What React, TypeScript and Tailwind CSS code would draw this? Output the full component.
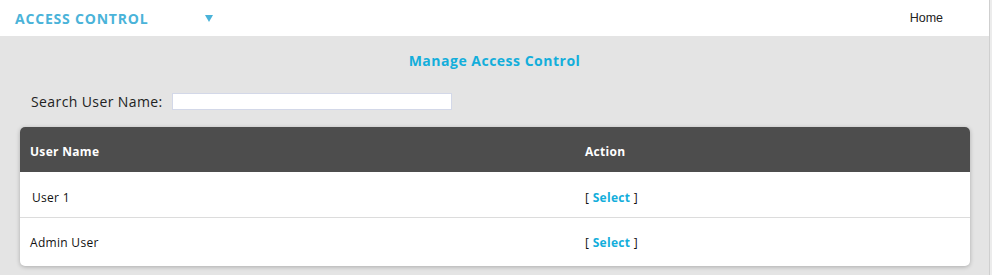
import React from 'react'

const users = ['User 1', 'Admin User']

const App: React.FC = () => {
    return (
        <div className="flex w-[992px] h-[275px] bg-[#e4e4e4] overflow-hidden" style={{ fontFamily: '"Open Sans", sans-serif' }}>
            <div className="w-[989px] flex flex-col">
                {/* Top bar */}
                <header className="h-[36px] bg-white flex items-center pl-[15px] pr-[46px]">
                    <span className="w-[190px] text-[14px] font-bold text-[#4ab3d9] tracking-[0.8px]">ACCESS CONTROL</span>
                    <span className="w-0 h-0 border-l-[4px] border-r-[4px] border-t-[7px] border-l-transparent border-r-transparent border-t-[#4ab3d9]" />
                    <span className="ml-auto text-[12.5px] text-[#222]" style={{ fontFamily: '"Liberation Sans", Arial, sans-serif' }}>
                        Home
                    </span>
                </header>

                <h1 className="mt-[15px] text-center text-[14px] font-bold text-[#13aedb] leading-[20px] tracking-[0.5px]">Manage Access Control</h1>

                <div className="mt-[21px] flex items-center pl-[31px] h-[18px]">
                    <label className="text-[14px] text-[#222] tracking-[0.4px]">Search User Name:</label>
                    <input className="ml-[9px] w-[280px] h-[17px] bg-white border border-[#d3d8e8] outline-none" />
                </div>

                {/* Table */}
                <div className="mt-[17px] mx-[20px] w-[950px] rounded-[5px] bg-white shadow-[0_1px_4px_rgba(0,0,0,0.25)]">
                    <div className="grid grid-cols-[555px_1fr] h-[45px] items-center bg-[#4d4d4d] rounded-t-[5px] px-[10px] pt-[4px] text-[12px] font-bold text-white tracking-[0.3px]">
                        <span>User Name</span>
                        <span>Action</span>
                    </div>
                    {users.map((u, i) => (
                        <div
                            key={u}
                            className={`grid grid-cols-[555px_1fr] items-center px-[10px] text-[12px] text-[#111] tracking-[0.3px] ${i === 0 ? 'h-[46px] pt-[6px] border-b border-[#dcdcdc]' : 'h-[48px] pt-[2px]'}`}
                        >
                            <span className={i === 0 ? 'pl-[2px]' : ''}>{u}</span>
                            <span>
                                [ <span className="font-bold text-[#13aedb]">Select</span> ]
                            </span>
                        </div>
                    ))}
                </div>
            </div>
            <div className="w-[3px] border-l border-[#cfcfcf] bg-[#ececec]" />
        </div>
    )
}

export default App
